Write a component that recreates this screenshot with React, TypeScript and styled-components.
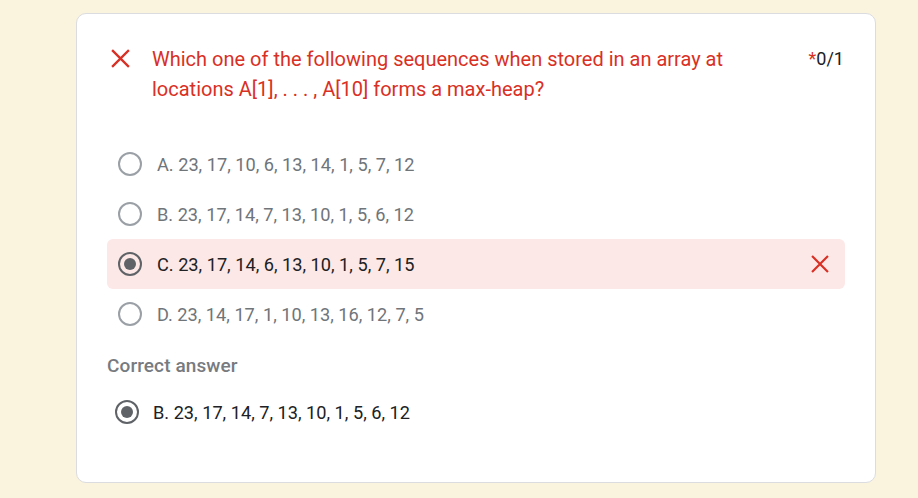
import styled, { createGlobalStyle } from 'styled-components'

const GlobalStyle = createGlobalStyle`
  html, body {
    margin: 0;
    padding: 0;
    background: #faf3dd;
    font-family: Roboto, 'Liberation Sans', Arial, sans-serif;
  }
`

const Page = styled.div`
  width: 918px;
  height: 498px;
  padding: 13px 0 0 76px;
  box-sizing: border-box;
`

const Card = styled.div`
  width: 800px;
  height: 470px;
  box-sizing: border-box;
  background: #fff;
  border: 1px solid #dadce0;
  border-radius: 10px;
  padding: 30px 30px 0 30px;
`

const Header = styled.div`
  display: flex;
  align-items: flex-start;
`

const HeaderIcon = styled.div`
  width: 45px;
  padding-left: 4px;
  padding-top: 5px;
  box-sizing: border-box;
  flex-shrink: 0;
`

const Question = styled.div`
  flex: 1;
  color: #d93025;
  font-size: 20px;
  line-height: 30px;
  padding-right: 40px;
`

const Score = styled.div`
  font-size: 18px;
  line-height: 30px;
  color: #202124;
  padding-right: 1px;
  span {
    color: #d93025;
  }
`

const Options = styled.div`
  margin-top: 35px;
  display: flex;
  flex-direction: column;
`

const Row = styled.div<{ $wrong?: boolean }>`
  height: 50px;
  display: flex;
  align-items: center;
  padding: 0 16px 0 11px;
  border-radius: 6px;
  background: ${(p) => (p.$wrong ? '#fce8e6' : 'transparent')};
`

const Label = styled.div<{ $selected?: boolean }>`
  flex: 1;
  margin-left: 15px;
  font-size: 18.2px;
  color: ${(p) => (p.$selected ? '#202124' : '#70757a')};
`

const SectionTitle = styled.div`
  margin-top: 15px;
  font-size: 19px;
  font-weight: 500;
  letter-spacing: 0.1px;
  color: #777b80;
`

const AnswerRow = styled(Row)`
  margin-top: 11px;
  padding-left: 8px;
  height: 48px;
`

const Radio = ({ checked }: { checked?: boolean }) => (
  <svg width="24" height="24" viewBox="0 0 24 24">
    <circle cx="12" cy="12" r="11" fill="none" stroke={checked ? '#5f6368' : '#9aa0a6'} strokeWidth="2" />
    {checked && <circle cx="12" cy="12" r="6" fill="#5f6368" />}
  </svg>
)

const Cross = ({ size = 20 }: { size?: number }) => (
  <svg width={size} height={size} viewBox="0 0 20 20">
    <path d="M2 2 L18 18 M18 2 L2 18" stroke="#d93025" strokeWidth="2.4" strokeLinecap="square" />
  </svg>
)

const options = [
  'A. 23, 17, 10, 6, 13, 14, 1, 5, 7, 12',
  'B. 23, 17, 14, 7, 13, 10, 1, 5, 6, 12',
  'C. 23, 17, 14, 6, 13, 10, 1, 5, 7, 15',
  'D. 23, 14, 17, 1, 10, 13, 16, 12, 7, 5',
]

const selected = 2

const App = () => {
  return (
    <Page>
      <GlobalStyle />
      <Card>
        <Header>
          <HeaderIcon>
            <Cross size={19} />
          </HeaderIcon>
          <Question>
            Which one of the following sequences when stored in an array at locations A[1], . . . , A[10] forms a max-heap?
          </Question>
          <Score>
            <span>*</span>0/1
          </Score>
        </Header>
        <Options>
          {options.map((o, i) => (
            <Row key={o} $wrong={i === selected}>
              <Radio checked={i === selected} />
              <Label $selected={i === selected}>{o}</Label>
              {i === selected && <Cross size={18} />}
            </Row>
          ))}
        </Options>
        <SectionTitle>Correct answer</SectionTitle>
        <AnswerRow>
          <Radio checked />
          <Label $selected style={{ marginLeft: 14 }}>
            {options[1]}
          </Label>
        </AnswerRow>
      </Card>
    </Page>
  )
}

export default App
